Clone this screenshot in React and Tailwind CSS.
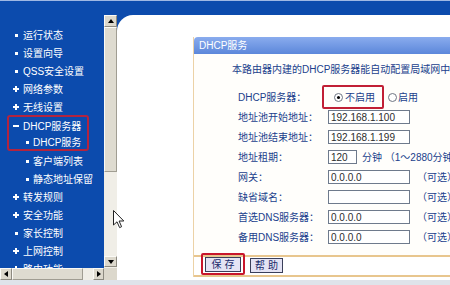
import React from "react";

const menu = [
	{ text: "运行状态", mark: "dot" },
	{ text: "设置向导", mark: "dot" },
	{ text: "QSS安全设置", mark: "dot" },
	{ text: "网络参数", mark: "plus" },
	{ text: "无线设置", mark: "plus" },
];

const menuAfter = [
	{ text: "客户端列表", mark: "dot", sub: true },
	{ text: "静态地址保留", mark: "dot", sub: true },
	{ text: "转发规则", mark: "plus" },
	{ text: "安全功能", mark: "plus" },
	{ text: "家长控制", mark: "dot" },
	{ text: "上网控制", mark: "plus" },
	{ text: "路由功能", mark: "plus" },
];

const Mark = ({ kind }) => (
	<span className="relative flex h-[8px] w-[8px] shrink-0 items-center justify-center">
		{kind === "dot" && <span className="h-[3px] w-[3px] bg-white" />}
		{kind === "plus" && (
			<>
				<span className="h-[2px] w-[6px] bg-white" />
				<span className="absolute h-[6px] w-[2px] bg-white" />
			</>
		)}
		{kind === "minus" && <span className="h-[2px] w-[6px] bg-white" />}
	</span>
);

const MenuItem = ({ text, mark, sub, inBox }) => {
	const pad = sub
		? inBox
			? "pl-[14px]"
			: "pl-[23px]"
		: inBox
		? "pl-[3px]"
		: "pl-[12px]";
	return (
		<div className={`flex h-[18px] items-center whitespace-nowrap ${pad}`}>
			<Mark kind={mark} />
			<span className={sub ? "ml-[2px]" : "ml-[3px]"}>{text}</span>
		</div>
	);
};

const Tri = ({ dir }) => {
	if (dir === "up")
		return <span className="h-0 w-0 border-x-[3px] border-b-[4px] border-x-transparent border-b-black" />;
	if (dir === "down")
		return <span className="h-0 w-0 border-x-[3px] border-t-[4px] border-x-transparent border-t-black" />;
	if (dir === "left")
		return <span className="h-0 w-0 border-y-[3px] border-r-[4px] border-y-transparent border-r-black" />;
	return <span className="h-0 w-0 border-y-[3px] border-l-[4px] border-y-transparent border-l-black" />;
};

const ScrollBtn = ({ dir, className }) => (
	<div
		className={`flex shrink-0 items-center justify-center border border-[#fbfaf6] border-r-[#8d8a80] border-b-[#8d8a80] bg-[#dcd8cc] ${className}`}
	>
		<Tri dir={dir} />
	</div>
);

const Radio = ({ on }) => (
	<span className="flex h-[9px] w-[9px] shrink-0 items-center justify-center rounded-full border border-[#6f7683] bg-white">
		{on && <span className="h-[3px] w-[3px] rounded-full bg-black" />}
	</span>
);

const Field = ({ value, w = "w-[82px]" }) => (
	<input
		readOnly
		value={value}
		className={`h-[14px] ${w} border border-[#6e7a8c] bg-white px-[2px] text-[10px] leading-[12px] text-[#2b2b2b] outline-none`}
	/>
);

const Row = ({ label, children }) => (
	<div className="flex h-[20px] items-center whitespace-nowrap">
		<div className="w-[90px] shrink-0">{label}</div>
		<div className="flex items-center">{children}</div>
	</div>
);

const Optional = () => <span className="ml-[7px]">（可选）</span>;

export default function App() {
	return (
		<div className="relative flex h-[285px] w-[450px] flex-col overflow-hidden bg-[#0c4bad] font-['Liberation_Sans','Noto_Sans_CJK_SC',sans-serif] text-[10px]">
			{/* top strip */}
			<div className="h-[15px] shrink-0 border-t border-[#9fb8e4]" />

			<div className="flex h-[265px] shrink-0">
				{/* left frame */}
				<div className="flex w-[117px] shrink-0 flex-col">
					<div className="flex h-[253px]">
						<div className="w-[104px] overflow-hidden pt-[11px] text-white">
							{menu.map((m) => (
								<MenuItem key={m.text} {...m} />
							))}
							<div className="mx-[7px] -mt-[1px] mb-[1px] w-[82px] rounded-[3px] border-2 border-[#b3243f]">
								<MenuItem text="DHCP服务器" mark="minus" inBox />
								<div className="flex h-[14px] items-center whitespace-nowrap pl-[14px]">
									<Mark kind="dot" />
									<span className="ml-[2px]">DHCP服务</span>
								</div>
							</div>
							{menuAfter.map((m) => (
								<MenuItem key={m.text} {...m} />
							))}
						</div>
						{/* vertical scrollbar */}
						<div className="flex w-[13px] flex-col bg-[#f0eee7]">
							<ScrollBtn dir="up" className="h-[12px]" />
							<div className="h-[145px] shrink-0 border border-[#fbfaf6] border-r-[#a09d92] border-b-[#a09d92] bg-[#dedbd0]" />
							<div className="flex-1" />
							<ScrollBtn dir="down" className="mb-[1px] h-[11px]" />
						</div>
					</div>
					{/* horizontal scrollbar */}
					<div className="flex h-[12px]">
						<div className="flex w-[104px] bg-[#f0eee7]">
							<ScrollBtn dir="left" className="w-[12px]" />
							<div className="w-[71px] border border-[#fbfaf6] border-r-[#a09d92] border-b-[#a09d92] bg-[#dedbd0]" />
							<div className="flex-1" />
							<ScrollBtn dir="right" className="w-[11px]" />
						</div>
						<div className="w-[13px] bg-[#dcd8cc]" />
					</div>
				</div>

				{/* content area */}
				<div className="flex-1 overflow-hidden rounded-tl-[16px] bg-white pl-[76px] pt-[22px]">
					<div className="flex w-[320px] flex-col border-l border-[#ecd2a6] text-[#213f8c]">
						<div className="h-[17px] rounded-tl-[4px] bg-gradient-to-b from-[#8aacee] to-[#5c87da] pl-[5px] leading-[17px] text-white">
							DHCP服务
						</div>
						<div className="bg-[#fffefb] pb-[8px] pl-[38px] pt-[6px]">
							<div className="h-[20px] whitespace-nowrap leading-[20px]">
								本路由器内建的DHCP服务器能自动配置局域网中各计算机的TCP/IP协议。
							</div>
							<div className="mt-[7px] pl-[6px]">
								<Row label="DHCP服务器：">
									<div className="-my-[2px] -ml-[6px] flex h-[24px] items-center rounded-[2px] border-2 border-[#c11f35] pl-[10px] pr-[7px]">
										<Radio on />
										<span className="ml-[2px]">不启用</span>
									</div>
									<span className="ml-[4px]">
										<Radio />
									</span>
									<span className="ml-[1px]">启用</span>
								</Row>
								<Row label="地址池开始地址：">
									<Field value="192.168.1.100" />
								</Row>
								<Row label="地址池结束地址：">
									<Field value="192.168.1.199" />
								</Row>
								<Row label="地址租期：">
									<Field value="120" w="w-[29px]" />
									<span className="ml-[5px]">分钟 （1～2880分钟，缺省为120分钟）</span>
								</Row>
								<Row label="网关：">
									<Field value="0.0.0.0" />
									<Optional />
								</Row>
								<Row label="缺省域名：">
									<Field value="" />
									<Optional />
								</Row>
								<Row label="首选DNS服务器：">
									<Field value="0.0.0.0" />
									<Optional />
								</Row>
								<Row label="备用DNS服务器：">
									<Field value="0.0.0.0" />
									<Optional />
								</Row>
							</div>
						</div>
						<div className="flex h-[22px] items-start border-y-2 border-[#e8c68e] bg-white">
							<div className="-mt-[4px] ml-[7px] rounded-[2px] border-2 border-[#c8162c] px-[2px] pb-[1px] pt-[2px]">
								<button className="h-[15px] w-[36px] border border-[#3a3f5a] bg-[#e4e3f4] text-[10px] leading-[13px] text-[#1b2a6b]">
									保 存
								</button>
							</div>
							<button className="ml-[5px] mt-[1px] h-[15px] w-[33px] border border-[#3a3f5a] bg-[#e4e3f4] text-[10px] leading-[13px] text-[#1b2a6b]">
								帮 助
							</button>
						</div>
					</div>
				</div>
			</div>

			{/* bottom line */}
			<div className="flex-1 bg-[#dfe3ea]" />

			{/* mouse pointer */}
			<svg
				className="absolute left-[113px] top-[210px]"
				width="12"
				height="19"
				viewBox="0 0 12 19"
			>
				<path
					d="M0.5 0.5 L0.5 15 L4 11.8 L6.6 17.6 L8.6 16.7 L6.1 11 L10.8 11 Z"
					fill="white"
					stroke="#222"
					strokeWidth="1"
				/>
			</svg>
		</div>
	);
}
